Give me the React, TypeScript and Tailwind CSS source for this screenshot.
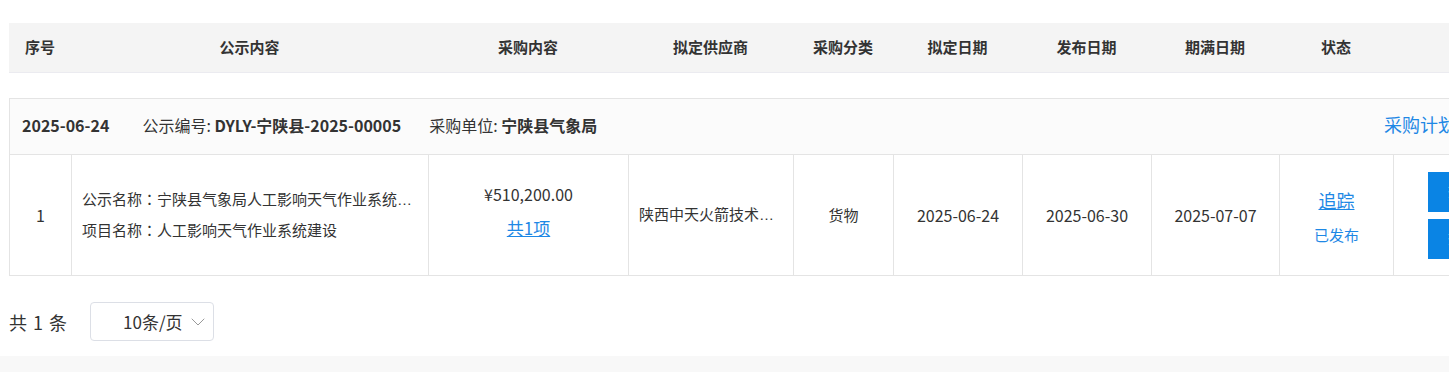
import { ChevronDown } from "lucide-react";

const cols = [
  { key: "no", title: "序号", w: "w-[62px]" },
  { key: "content", title: "公示内容", w: "w-[357px]" },
  { key: "buy", title: "采购内容", w: "w-[200px]" },
  { key: "supplier", title: "拟定供应商", w: "w-[165px]" },
  { key: "type", title: "采购分类", w: "w-[100px]" },
  { key: "plan", title: "拟定日期", w: "w-[129px]" },
  { key: "pub", title: "发布日期", w: "w-[129px]" },
  { key: "end", title: "期满日期", w: "w-[128px]" },
  { key: "status", title: "状态", w: "w-[114px]" },
  { key: "op", title: "", w: "w-[150px]" },
];

function Cell({ w, children, className = "" }: { w: string; children?: React.ReactNode; className?: string }) {
  return (
    <div className={`${w} shrink-0 border-l border-[#e4e4e4] flex flex-col items-center justify-center ${className}`}>
      {children}
    </div>
  );
}

// centred full-width colon, as the reference font draws it
const Colon = () => <span className="font-['Noto_Sans_CJK_TC',sans-serif]">：</span>;

export default function App() {
  return (
    <div className="w-[1449px] h-[372px] overflow-hidden bg-white font-['Noto_Sans_CJK_SC',sans-serif] text-[#333]">
      <div className="pt-[23px] pl-[9px] w-[1600px]">
        {/* table head */}
        <div className="flex h-[50px] bg-[#f4f4f4] border-b border-[#ebebf0]">
          {cols.map((c) => (
            <div key={c.key} className={`${c.w} shrink-0 flex items-center justify-center text-[15px] font-bold text-[#333]`}>
              {c.title}
            </div>
          ))}
        </div>

        {/* group */}
        <div className="mt-[25px] w-[1534px] border border-[#e4e4e4]">
          <div className="flex items-center h-[55px] bg-[#fbfbfb] pl-[12px] pb-[4px] text-[16px]">
            <span className="font-bold">2025-06-24</span>
            <span className="ml-[33px]">
              公示编号: <span className="font-bold">DYLY-宁陕县-2025-00005</span>
            </span>
            <span className="ml-[28px]">
              采购单位: <span className="font-bold">宁陕县气象局</span>
            </span>
            <a className="ml-auto mr-[86px] text-[18px] text-[#1e88e5] cursor-pointer">采购计划</a>
          </div>

          <div className="flex h-[121px] border-t border-[#e4e4e4] text-[15px]">
            <Cell w="w-[61px]" className="border-l-0 text-[16px]">1</Cell>
            <Cell w="w-[357px]" className="!items-start pl-[10px] pr-[14px] gap-[8px] font-['Liberation_Sans','Noto_Sans_CJK_SC',sans-serif]">
              <div className="w-full truncate">公示名称<Colon />宁陕县气象局人工影响天气作业系统建设项目</div>
              <div className="w-full truncate">项目名称<Colon />人工影响天气作业系统建设</div>
            </Cell>
            <Cell w="w-[200px]" className="gap-[9px] pb-[8px]">
              <div className="text-[16px]">¥510,200.00</div>
              <a className="text-[17px] text-[#1e88e5] underline cursor-pointer">共1项</a>
            </Cell>
            <Cell w="w-[165px]" className="!items-start pl-[10px] pr-[10px] font-['Liberation_Sans','Noto_Sans_CJK_SC',sans-serif]">
              <div className="w-full truncate">陕西中天火箭技术股份有限公司</div>
            </Cell>
            <Cell w="w-[100px]">货物</Cell>
            <Cell w="w-[129px]" className="text-[16px]">2025-06-24</Cell>
            <Cell w="w-[129px]" className="text-[16px]">2025-06-30</Cell>
            <Cell w="w-[128px]" className="text-[16px]">2025-07-07</Cell>
            <Cell w="w-[114px]" className="gap-[10px] pt-[4px]">
              <a className="text-[18px] text-[#1e88e5] underline cursor-pointer">追踪</a>
              <span className="text-[15px] text-[#1e88e5]">已发布</span>
            </Cell>
            <Cell w="w-[150px]" className="!items-start pl-[34px] gap-[7px]">
              <button className="w-[94px] h-[40px] bg-[#0a84e4] text-white text-[14px] text-left pl-[20px]">查看详情</button>
              <button className="w-[94px] h-[40px] bg-[#0a84e4] text-white text-[14px] text-left pl-[20px]">查看公告</button>
            </Cell>
          </div>
        </div>

        {/* pagination */}
        <div className="flex items-start h-[80px] pt-[26px]">
          <span className="text-[18px] text-[#333] leading-[40px] tracking-[1px]">共 1 条</span>
          <div className="ml-[22px] w-[124px] h-[39px] border border-[#dcdfe6] rounded-[4px] flex items-center pl-[32px] pr-[3px]">
            <span className="text-[17px] text-[#333]">10条/页</span>
            <ChevronDown className="ml-auto w-[24px] h-[24px] text-[#999]" strokeWidth={1} />
          </div>
        </div>
      </div>
      <div className="h-[20px] bg-[#f8f8f8]" />
    </div>
  );
}
